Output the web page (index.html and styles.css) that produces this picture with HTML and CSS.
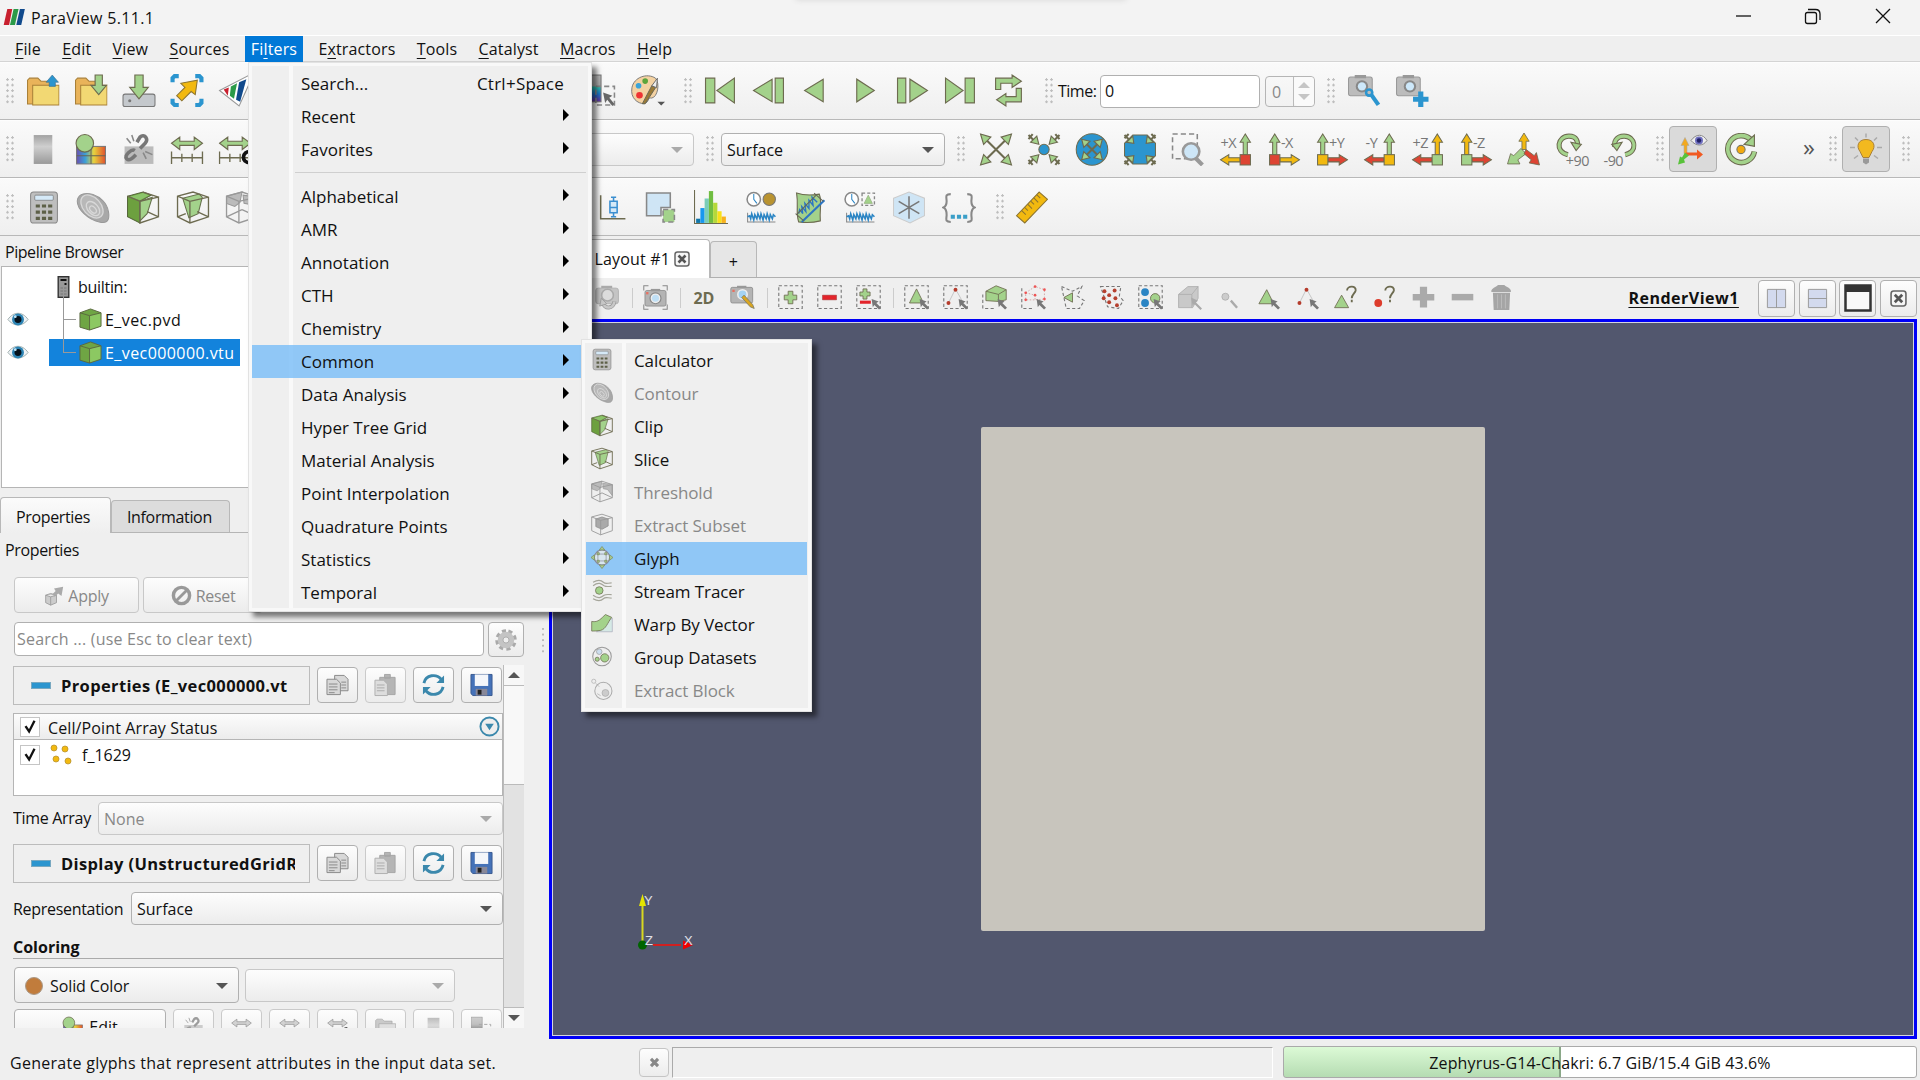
FILE: index.html
```html
<!DOCTYPE html>
<html lang="en">
<head>
<meta charset="utf-8">
<title>ParaView 5.11.1</title>
<link rel="stylesheet" href="styles.css">
</head>
<body>
<svg class="sprite" width="0" height="0">
<defs>
<linearGradient id="rainbow"><stop offset="0" stop-color="#6a4fb0"/><stop offset=".3" stop-color="#3aa0d8"/><stop offset=".6" stop-color="#e8d23c"/><stop offset="1" stop-color="#e0502c"/></linearGradient>
<linearGradient id="legend" x2="0" y2="1"><stop offset="0" stop-color="#bbb"/><stop offset=".4" stop-color="#aaa"/><stop offset=".45" stop-color="#2fc4b0"/><stop offset=".7" stop-color="#1b78cc"/><stop offset="1" stop-color="#6a2fa0"/></linearGradient>
<linearGradient id="grayv" x2="0" y2="1"><stop offset="0" stop-color="#a2a2a2"/><stop offset=".4" stop-color="#cfcfcf"/><stop offset="1" stop-color="#999"/></linearGradient>
</defs>
<symbol id="logo" viewBox="0 0 24 20"><path fill="#c8202f" d="M4 1h5.500L6 19H0z"/><path fill="#2b9a48" d="M11 1h5.500l-4 18H7z"/><path fill="#114a8c" d="M18 1h5.500l-4 18h-5.500z"/></symbol>
<symbol id="folder" viewBox="0 0 32 32"><path fill="#e9b35a" stroke="#a98038" d="M1 29V6l2-2h8l3 3h12v22z"/><path fill="#f2d873" stroke="#a98038" d="M6 11h25.500v19H6z"/></symbol>
<symbol id="open" viewBox="0 0 32 32"><use href="#folder"/><path fill="#2b95cf" stroke="#3f6f8c" stroke-width=".6" d="M25 1l6 7h-3v4h-6V8h-3z"/></symbol>
<symbol id="opendown" viewBox="0 0 32 32"><use href="#folder"/><path class="g" d="M20 1h7v10h4l-7.500 9L16 11h4z"/></symbol>
<symbol id="save" viewBox="0 0 32 32"><rect x=".5" y="19.500" width="31" height="12" rx="2" fill="#c4c8cc" stroke="#777"/><path class="g" d="M12 1h8v12h5l-9 11-9-11h5z"/><circle cx="7" cy="26" r="1.500" fill="#777"/></symbol>
<symbol id="extract" viewBox="0 0 32 32"><path fill="none" stroke="#2b95cf" stroke-width="4" d="M2 8V4l2-2h4M24 2h4l2 2v4M2 24v4l2 2h4M24 30h4l2-2v-4"/><path fill="#f2b90f" stroke="#8c7430" d="M26 6l-2 14-4-3-9 9-5-5 8-8-4-4z"/></symbol>
<symbol id="pvtri" viewBox="0 0 32 32"><path fill="#fff" stroke="#999" d="M1 16L30 1v8L20 31z"/><path fill="#c8202f" d="M5 15l5-2-1 8z"/><path fill="#2b9a48" d="M12 12l6-3-3 15-4-3z"/><path fill="#114a8c" d="M20 8l7-3-6 22-4-2z"/></symbol>
<symbol id="legendi" viewBox="0 0 32 32"><rect x="0" y="1" width="17" height="26" fill="url(#legend)" stroke="#777"/><path class="dash" d="M12 12h18v18H12z"/><path fill="#666" d="M19 18l9 3-3 2 5 6-2 2-5-6-2 3z"/></symbol>
<symbol id="palette" viewBox="0 0 36 34"><path fill="#f4d2a2" stroke="#777" d="M26 4C17-2 3 3 1 14s6 17 13 17c6-2 3-7 8-6 6-1 9-15 4-21z"/><circle cx="8" cy="12" r="3" fill="#3ba4d8"/><circle cx="15" cy="7" r="3" fill="#5da53c"/><circle cx="9" cy="22" r="3.500" fill="#e33"/><path fill="#9b7a35" stroke="#665" d="M12 31l10-19 4 2-11 17z"/><path fill="#eee" stroke="#666" d="M22 12l6-8-1 10z"/><path fill="#555" d="M28 29h8l-4 4z"/></symbol>
<symbol id="first" viewBox="0 0 32 32"><path class="g" d="M1 4h9v24H1zM29 4v24L12 16z"/></symbol>
<symbol id="prev" viewBox="0 0 32 32"><path class="g" d="M22 4h8v24h-8zM19 5v22L1 16z"/></symbol>
<symbol id="rev" viewBox="0 0 32 32"><path class="g" d="M22 5v22L4 16z"/></symbol>
<symbol id="play" viewBox="0 0 32 32"><path class="g" d="M8 5v22l17-11z"/></symbol>
<symbol id="next" viewBox="0 0 32 32"><path class="g" d="M1 4h8v24H1zM13 5v22l17-11z"/></symbol>
<symbol id="last" viewBox="0 0 32 32"><path class="g" d="M20 4h9v24h-9zM1 4v24l17-12z"/></symbol>
<symbol id="loop" viewBox="0 0 32 32"><path class="g" d="M3 15V4h16V1l9 6-9 6v-4H8v6zM28 14v13H13v4l-9-6 9-6v3h10v-8z"/></symbol>
<symbol id="cam" viewBox="0 0 32 32"><rect x="1" y="3" width="23" height="18" rx="2" fill="#bcbcbc" stroke="#999"/><path fill="#999" d="M7 1h11v3H7z"/><circle cx="14" cy="12" r="6" fill="#888"/><circle cx="14" cy="12" r="4" fill="#cde8fa"/></symbol>
<symbol id="camwrench" viewBox="0 0 32 32"><use href="#cam"/><path stroke="#2b95cf" stroke-width="4" fill="none" d="M23 20l7 10"/><circle cx="21" cy="18" r="3" fill="none" stroke="#2b95cf" stroke-width="2.500"/></symbol>
<symbol id="camplus" viewBox="0 0 32 32"><use href="#cam"/><path fill="#2b95cf" d="M22 17h5v5h5v5h-5v5h-5v-5h-5v-5h5z"/></symbol>
<symbol id="graybar" viewBox="0 0 32 32"><rect x="7" y="2" width="18" height="28" fill="url(#grayv)"/></symbol>
<symbol id="sphere" viewBox="0 0 32 32"><rect x="2" y="13" width="28" height="17" fill="url(#rainbow)" stroke="#777"/><path stroke="#665" fill="none" d="M2 22h28M16 13v17"/><circle class="g" cx="10" cy="10" r="8.500"/></symbol>
<symbol id="unlink" viewBox="0 0 32 32"><rect x="2" y="13" width="28" height="17" fill="#bbb"/><path fill="none" stroke="#777" stroke-width="3.500" d="M14 9l3-5c4-4 9 2 5 6l-5 5M12 17c-3-2-11 5-8 8s7-2 9-4"/><path stroke="#888" stroke-width="1.500" d="M4 5l4 5M9 2l2 6M20 19l3 6M22 18l7 3"/></symbol>
<symbol id="range" viewBox="0 0 32 32"><path class="g" d="M1 10l8-6v4h14V4l8 6-8 6v-4H9v4z"/><path fill="none" stroke="#6d6b50" stroke-width="1.300" d="M1 18v12M31 18v12M1 24h30M11 20v8M21 20v8"/></symbol>
<symbol id="rangec" viewBox="0 0 32 32"><use href="#range"/><path fill="none" stroke="#111" stroke-width="3.500" d="M31 18c-8-1-10 11 0 11"/></symbol>
<symbol id="resetcam" viewBox="0 0 32 32"><path stroke="#6d6b50" stroke-width="2" d="M5 5l22 22M27 5L5 27"/><path class="g" d="M1 1l10 3-7 7zM31 1l-10 3 7 7zM1 31l10-3-7-7zM31 31l-10-3 7-7z"/></symbol>
<symbol id="zoomdata" viewBox="0 0 32 32"><circle cx="16" cy="16" r="5" fill="#2b95cf" stroke="#6d6b50"/><path stroke="#6d6b50" stroke-width="2" d="M1 2l5 5M5 1l-4 5M31 2l-5 5M27 1l4 5M1 30l5-5M5 31l-4-5M31 30l-5-5M27 31l4-5"/><path class="g" d="M11 11L9 3l-6 6zM21 11l2-8 6 6zM11 21l-2 8-6-6zM21 21l2 8 6-6z"/></symbol>
<symbol id="ballout" viewBox="0 0 32 32"><circle cx="16" cy="16" r="15.300" fill="#2b95cf" stroke="#6d6b50"/><path stroke="#6d6b50" stroke-width="2" d="M9 9l14 14M23 9L9 23"/><path class="g" d="M6 6l8 2-6 6zM26 6l-8 2 6 6zM6 26l8-2-6-6zM26 26l-8-2 6-6z"/></symbol>
<symbol id="ballin" viewBox="0 0 32 32"><path fill="#2b95cf" stroke="#6d6b50" d="M9 2h14l8 8v12l-8 8H9l-8-8V10z"/><path stroke="#6d6b50" stroke-width="2" d="M1 2l4 4M5 1L1 5M31 2l-4 4M27 1l4 4M1 30l4-4M5 31l-4-4M31 30l-4-4M27 31l4-4"/><path class="g" d="M10 10L9 3 3 9zM22 10l1-7 6 6zM10 22l-1 7-6-6zM22 22l1 7 6-6z"/></symbol>
<symbol id="zoombox" viewBox="0 0 32 32"><path class="dash" d="M1 1h24v24H1z"/><path stroke="#999" stroke-width="4" d="M23 24l7 7"/><circle cx="19" cy="18" r="8" fill="#cde6f7" stroke="#999" stroke-width="2.500"/></symbol>
<symbol id="upL" viewBox="0 0 32 32"><path d="M5 21V9H2l5-8 5 8H9v12z"/></symbol>
<symbol id="upR" viewBox="0 0 32 32"><path d="M23 21V9h-3l5-8 5 8h-3v12z"/></symbol>
<symbol id="toR" viewBox="0 0 32 32"><path d="M12 24h11v-3l8 5-8 5v-3H12z"/></symbol>
<symbol id="toL" viewBox="0 0 32 32"><path d="M20 24H9v-3l-8 5 8 5v-3h11z"/></symbol>
<symbol id="iso" viewBox="0 0 32 32"><g stroke="#6d6b50" stroke-width=".8"><path fill="#f2b90f" d="M14 16V8h-3l5-8 5 8h-3v8z"/><path fill="#a3d28b" d="M13 15l5 5-8 6 2 4H0l3-10 3 2z"/><path fill="#dd4433" d="M18 16l8 6 2-3 3 12-10-2 2-3-7-6z"/></g></symbol>
<symbol id="rotp" viewBox="0 0 32 32"><path fill="none" stroke="#6d6b50" stroke-width="5" d="M12 21C-1 18 2 3 13 3c8 0 9 6 8 10"/><path fill="none" stroke="#a3d28b" stroke-width="3" d="M12 21C-1 18 2 3 13 3c8 0 9 6 8 10"/><path class="g" d="M15 9l10 2-5 6z"/></symbol>
<symbol id="rotm" viewBox="0 0 32 32"><path fill="none" stroke="#6d6b50" stroke-width="5" d="M21 21C34 18 31 3 20 3c-8 0-10 6-9 10"/><path fill="none" stroke="#a3d28b" stroke-width="3" d="M21 21C34 18 31 3 20 3c-8 0-10 6-9 10"/><path class="g" d="M18 9L8 11l5 6z"/></symbol>
<symbol id="orient" viewBox="0 0 32 32"><path fill="#f2a91f" stroke="#aaa" stroke-width=".6" d="M7 20V12H4l4-8 4 8h-2v8z"/><path fill="#f05a22" d="M9 19h11v-3l6 5-6 5v-4H9z"/><path fill="#58c23a" d="M8 19l4 3-5 4 1 3-7 2 2-8 2 1z"/><path fill="#eee" stroke="#888" d="M14 7c5-7 12-7 16 0-4 6-11 6-16 0z"/><circle cx="22" cy="7" r="4" fill="#7070c0"/><circle cx="22" cy="7" r="2.200" fill="#226"/></symbol>
<symbol id="center" viewBox="0 0 32 32"><path fill="none" stroke="#6d6b50" stroke-width="5.500" d="M26 7A13 13 0 1 0 29 18"/><path fill="none" stroke="#a3d28b" stroke-width="3.500" d="M26 7A13 13 0 1 0 29 18"/><path class="g" d="M29 2v11l-10-2z"/><circle cx="16" cy="16" r="4" fill="#f2a90f" stroke="#776"/></symbol>
<symbol id="bulb" viewBox="0 0 32 32"><path fill="#f2b91f" stroke="#a98038" d="M16 6c-8 0-10 7-6 12l3 6h6l3-6c4-5 2-12-6-12z"/><path fill="#999" d="M13 25h6v4l-3 2-3-2z"/><path stroke="#aaa" stroke-width="1.500" d="M16 0v4M5 4l3 3M27 4l-3 3M0 14h5M27 14h5M4 25l4-3M28 25l-4-3"/></symbol>
<symbol id="calc" viewBox="0 0 32 32"><rect x="3" y="1" width="26" height="30" rx="3" fill="#bebebe" stroke="#888"/><rect x="7" y="4" width="18" height="5" rx="1" fill="#d5e9f7" stroke="#777" stroke-width=".7"/><path fill="#5d6048" d="M8 13h4v3H8zM14 13h4v3h-4zM20 13h4v3h-4zM8 19h4v3H8zM14 19h4v3h-4zM20 19h4v3h-4zM8 25h4v3H8zM14 25h4v3h-4zM20 25h4v3h-4z"/></symbol>
<symbol id="contour" viewBox="0 0 32 32"><path fill="#a8a8a8" stroke="#999" d="M1 8C4-3 28 3 31 20c2 12-5 11-9 10C12 28-1 17 1 8z"/><g fill="#b8b8b8" stroke="#d8d8d8" stroke-width="1.300"><ellipse cx="15" cy="15" rx="13" ry="8.500" transform="rotate(48 15 15)"/><ellipse cx="16" cy="17" rx="8" ry="5" transform="rotate(48 16 17)"/><ellipse cx="16" cy="18" rx="4" ry="2.500" transform="rotate(48 16 18)"/></g></symbol>
<symbol id="clip" viewBox="0 0 32 32"><path fill="#6da03f" stroke="#55663a" d="M1 5l15-4 8 3-11 6v21L1 25z"/><path fill="#a3d28b" stroke="#66704c" d="M13 10l12-4-5 16-7 7z"/><path fill="#8cc46a" d="M3 5.500L16 2l6 2-9 5z"/><path fill="none" stroke="#6d6b50" stroke-width="1.300" d="M1 5l12 5 18-4v19l-18 6V10M16 1l15 5M20 20l11 5"/></symbol>
<symbol id="slice" viewBox="0 0 32 32"><path fill="#a3d28b" stroke="#66704c" d="M6 7l16-4 3 3-4 16-9 4z"/><path fill="none" stroke="#6d6b50" stroke-width="1.300" d="M1 5l15-4 15 5v19l-18 6-12-6zM1 5l12 5 18-4M13 10v21M20 20l11 5M1 25l8-3"/></symbol>
<symbol id="thresh" viewBox="0 0 32 32"><path fill="#bbb" stroke="#999" d="M1 5l15-4-2 10-5 4-8-3zM17 4l14 2v16l-7-9-6-1z"/><path fill="none" stroke="#999" stroke-width="1.300" d="M1 5l15-4 15 5v19l-18 6-12-6zM1 5l12 5 18-4M13 10v21M16 18l15 7M16 18L1 25"/></symbol>
<symbol id="subset" viewBox="0 0 32 32"><path fill="#aaa" stroke="#888" d="M7 8l9-3 9 3v10l-9 5-9-4z"/><path fill="none" stroke="#999" stroke-width="1.300" d="M1 5l15-4 15 5v19l-17 6-13-6zM1 5l13 5 17-4M14 10v21"/></symbol>
<symbol id="boxplot" viewBox="0 0 32 32"><path fill="none" stroke="#6d6b50" stroke-width="1.500" d="M5 4v23h24"/><path fill="#d5e9f7" stroke="#3b8fd0" stroke-width="1.500" d="M14 10h7v11h-7zM14 16h7M17.500 6v4M17.500 21v4M15 6h5M15 25h5"/></symbol>
<symbol id="exsel" viewBox="0 0 32 32"><path fill="#cfe5f5" stroke="#888" stroke-width="1.500" d="M2 2h23v14h-9v8H2z"/><path fill="#a3d28b" d="M18 18h11v12H18z"/><path class="dash" d="M18 18h11v12H18z"/></symbol>
<symbol id="hist" viewBox="0 0 32 32"><path fill="#17a" d="M2 27h4v4H2z"/><path fill="#1898f0" d="M6 17h4v14H6z"/><path fill="#7acdb8" d="M10 8h4v23h-4z"/><path fill="#70bd41" d="M14 1h4v30h-4z"/><path fill="#b5d93a" d="M18 12h4v19h-4z"/><path fill="#f9e018" d="M22 20h4v11h-4z"/><path fill="#f8b21c" d="M26 25h4v6h-4z"/><path fill="none" stroke="#6d6b50" d="M.5 0v31.500H32"/></symbol>
<symbol id="wave" viewBox="0 0 32 32"><path fill="none" stroke="#888" d="M3 21v9h27"/><path fill="none" stroke="#2b85c4" stroke-width="1.500" d="M3 25l2-1 1 3 1-5 2 6 1-5 2 4 1-5 2 5 1-5 2 6 1-5 2 4 1-5 2 6 1-5 2 4 1-4 2 2"/></symbol>
<symbol id="ptime" viewBox="0 0 32 32"><use href="#wave"/><circle cx="9" cy="8" r="6.500" fill="#fff" stroke="#888" stroke-width="1.500"/><path fill="none" stroke="#2b85c4" d="M9 3v5l3 4"/><circle cx="24" cy="8" r="6" fill="#b99330" stroke="#777"/></symbol>
<symbol id="ptimesel" viewBox="0 0 32 32"><use href="#wave"/><circle cx="8" cy="8" r="6.500" fill="#fff" stroke="#888" stroke-width="1.500"/><path fill="none" stroke="#2b85c4" d="M8 3v5l3 4"/><path fill="none" stroke="#888" stroke-width="1.300" stroke-dasharray="3 2" d="M18 2h12v12H18z"/><path fill="#a3d28b" stroke="#8aa873" stroke-width=".6" d="M20 12l4-8 4 8z"/></symbol>
<symbol id="pline" viewBox="0 0 32 32"><path class="g" d="M3 2c6 2 16 2 22 1 3 8 0 15 1 26-8 2-13 2-21 1-3-10 0-16-2-28z"/><path stroke="#2b75c4" stroke-width="2" d="M8 30L30 9"/><path fill="none" stroke="#2b75c4" stroke-width="1.300" d="M5 22l1-4 3 4-1-7 4 5-1-8 4 5 0-8 4 5-1-8 5 5"/><path stroke="#665" d="M2 22l8 7M20 2l9 8"/><path stroke="#665" d="M3 23L22 4"/></symbol>
<symbol id="snow" viewBox="0 0 32 32"><path fill="#cfe5f5" stroke="#ccc" d="M1 7l15-6 15 6v17l-14 7-16-7z"/><path stroke="#777" stroke-width="1.500" d="M16 5v22M6 10l20 12M26 10L6 22"/></symbol>
<symbol id="braces" viewBox="0 0 32 32"><path fill="none" stroke="#888" stroke-width="2" d="M8 3c-6 0-4 3-4 7s-1 5-3 6c2 1 3 3 3 7s-2 7 4 7M24 3c6 0 4 3 4 7s1 5 3 6c-2 1-3 3-3 7s2 7-4 7"/><path fill="#3b9fc8" d="M8 23h4v4H8zM14 23h4v4h-4zM20 23h4v4h-4z"/></symbol>
<symbol id="ruler" viewBox="0 0 32 32"><path fill="#f2b90f" stroke="#8c7430" d="M23 1l8 7L9 31l-8-7z"/><path stroke="#8c7430" d="M6 19l4 4M9 16l3 3M12 13l4 4M15 10l3 3M18 7l4 4M21 4l3 3"/></symbol>
<symbol id="camg" viewBox="0 0 32 32"><rect x="1" y="4" width="29" height="20" rx="3" fill="#c4c4c4" stroke="#aaa"/><path fill="#aaa" d="M8 1h14v3H8z"/><circle cx="16" cy="13" r="7.500" fill="#dcdcdc" stroke="#aaa" stroke-width="2"/><path fill="none" stroke="#999" stroke-width="5" d="M10 23c3 8 13 8 15-2"/><path fill="none" stroke="#c8c8c8" stroke-width="3" d="M10 23c3 8 13 8 15-2"/><path fill="#c8c8c8" stroke="#999" d="M6 27l2-10 7 7z"/></symbol>
<symbol id="camc" viewBox="0 0 32 32"><path fill="none" stroke="#888" stroke-width="1.300" d="M1 7V1h6M25 1h6v6M1 25v6h6M25 31h6v-6"/><rect x="2.500" y="7" width="27" height="20" rx="2.500" fill="#b4b4b4" stroke="#888"/><path fill="#999" d="M10 5h12v3H10z"/><circle cx="16" cy="17" r="7" fill="#eee" stroke="#888" stroke-width="1.500"/><circle cx="16" cy="17" r="4.500" fill="#bfdff5"/><path fill="#e87060" d="M4 9h3v3H4z"/></symbol>
<symbol id="campen" viewBox="0 0 32 32"><rect x="1" y="3" width="28" height="20" rx="2" fill="#b4b4b4" stroke="#888"/><path fill="#999" d="M9 1h12v3H9z"/><circle cx="16" cy="12" r="6" fill="#a5d3f2" stroke="#eee" stroke-width="2"/><path fill="#e87060" d="M3 6h3v3H3z"/><path fill="#d9a520" stroke="#776" d="M15 16l3-3 11 12 2 5-5-2z"/></symbol>
<symbol id="box" viewBox="0 0 32 32"><path class="dash2" d="M1 1h30v29H1z"/></symbol>
<symbol id="ptr" viewBox="0 0 32 32"><path fill="#777" d="M20 18l9 3-3 2 6 6-2.500 2.500-6-6-2 3z"/></symbol>
<symbol id="splus" viewBox="0 0 32 32"><use href="#box"/><path class="g" d="M13 8h6v5h5v6h-5v5h-6v-5H8v-6h5z"/></symbol>
<symbol id="sminus" viewBox="0 0 32 32"><use href="#box"/><path fill="#e3242b" stroke="#933" stroke-width=".6" d="M7 13h18v6H7z"/></symbol>
<symbol id="stog" viewBox="0 0 32 32"><use href="#box"/><path class="g" d="M9 5h5v4h4v5h-4v4H9v-4H5V9h4z"/><path fill="#e3242b" d="M5 20h14v4H5z"/><use href="#ptr"/></symbol>
<symbol id="scell" viewBox="0 0 32 32"><use href="#box"/><path class="g" d="M16 5l9 18H7z"/><use href="#ptr"/></symbol>
<symbol id="tri3" viewBox="0 0 32 32"><path fill="none" stroke="#bbb" d="M16 5l10 18M16 5L7 23"/><circle cx="16" cy="6" r="2.500" fill="#b53b2b"/><circle cx="7" cy="23" r="2.500" fill="#b53b2b"/><use href="#ptr"/></symbol>
<symbol id="spoint" viewBox="0 0 32 32"><use href="#box"/><use href="#tri3"/></symbol>
<symbol id="fcell" viewBox="0 0 32 32"><path class="dash2" d="M1 12v18h14"/><path class="g" d="M5 8L18 1l13 5v13l-10 2-16-1zM5 8l16 4v9M21 12l10-6"/><use href="#ptr"/></symbol>
<symbol id="fpoint" viewBox="0 0 32 32"><path class="dash2" d="M1 4v26h14"/><path fill="none" stroke="#c99" stroke-dasharray="2 2" d="M6 10l12-8 12 4v12l-12 1-12 0zM6 10l12 3v6"/><g fill="#e55"><circle cx="6" cy="10" r="1.700"/><circle cx="18" cy="2" r="1.700"/><circle cx="30" cy="6" r="1.700"/><circle cx="30" cy="18" r="1.700"/><circle cx="6" cy="19" r="1.700"/><circle cx="18" cy="13" r="1.700"/></g><use href="#ptr"/></symbol>
<symbol id="poly" viewBox="0 0 32 32"><path class="dash2" d="M2 2l14 6L28 2l-6 12 9 6-6 10H8z"/><path class="g" d="M5 16l11-6v12z"/></symbol>
<symbol id="polyp" viewBox="0 0 32 32"><path class="dash2" d="M2 2h26l-2 12 5 6-6 10-14-2z"/><g fill="#b5402f"><circle cx="7" cy="8" r="2.500"/><circle cx="20" cy="7" r="2.500"/><circle cx="13" cy="13" r="2.500"/><circle cx="21" cy="17" r="2.500"/><circle cx="6" cy="17" r="2.500"/><circle cx="13" cy="22" r="2.500"/><circle cx="23" cy="26" r="2.500"/></g></symbol>
<symbol id="blocks" viewBox="0 0 32 32"><use href="#box"/><circle cx="9" cy="9" r="5" fill="#2b85c4"/><circle cx="9" cy="23" r="5" fill="#2b85c4"/><circle class="g" cx="22" cy="17" r="6"/><use href="#ptr"/></symbol>
<symbol id="gcube" viewBox="0 0 32 32"><path fill="#c9c9c9" stroke="#aaa" d="M2 12L14 2h13v15l-7 12H2zM2 12h17v17M19 12l8-10"/><path fill="#aaa" d="M18 16l9 4-3 2 8 8-2 2-8-8-2 3z"/></symbol>
<symbol id="gpt" viewBox="0 0 32 32"><circle cx="12" cy="15" r="4.500" fill="#ccc" stroke="#aaa"/><path stroke="#aaa" stroke-width="3" d="M19 20l8 9"/></symbol>
<symbol id="hcell" viewBox="0 0 32 32"><path class="g" d="M15 6l9 18H5z"/><use href="#ptr"/></symbol>
<symbol id="qcell" viewBox="0 0 32 32"><path class="g" d="M11 13l9 16H2z"/><path class="q" d="M18 7c0-6 12-7 11 0-1 4-5 5-5 10M24 19v3"/></symbol>
<symbol id="qpt" viewBox="0 0 32 32"><circle cx="8" cy="23" r="5" fill="#dd3c2c"/><path class="q" d="M17 7c0-6 12-7 11 0-1 4-5 5-5 10M23 19v3"/></symbol>
<symbol id="gplus" viewBox="0 0 32 32"><path fill="#aaa" d="M11 1h10v10h10v9H21v10H11V20H1v-9h10z"/></symbol>
<symbol id="gminus" viewBox="0 0 32 32"><path fill="#aaa" d="M1 11h30v9H1z"/></symbol>
<symbol id="trash" viewBox="0 0 32 32"><path fill="#a5a5a5" d="M3 7c3-5 7-4 9-8h7c2 4 7 3 9 8v2H3zM5 10h22l-1 22H6z"/><path stroke="#c0c0c0" d="M11 12v18M16 12v18M21 12v18"/></symbol>
<symbol id="xbox" viewBox="0 0 16 16"><rect x="1" y="1" width="14" height="14" rx="2.500" fill="#f6f6f6" stroke="#666" stroke-width="1.500"/><path stroke="#555" stroke-width="2.600" d="M4.500 4.500l7 7M11.500 4.500l-7 7"/></symbol>
<symbol id="copy" viewBox="0 0 24 24"><g fill="#d8d8d8" stroke="#888"><path d="M9 2h10l4 4v12H9z"/><path d="M1 6h10l4 4v12H1z"/></g><path stroke="#888" d="M3 11h9M3 14h9M3 17h9M3 20h6M16 9h5M16 12h5M16 15h5"/></symbol>
<symbol id="paste" viewBox="0 0 24 24"><path fill="#b5b5b5" stroke="#a5a5a5" d="M6 4h16v18H6zM11 1h6v4h-6z"/><path fill="#ddd" stroke="#b0b0b0" d="M1 7h9l4 4v12H1z"/><path stroke="#aaa" d="M3 12h8M3 15h8M3 18h8"/></symbol>
<symbol id="reload" viewBox="0 0 24 24"><path fill="none" stroke="#3b88ac" stroke-width="3" d="M2 10C4 1 15 0 20 6M22 14c-2 9-13 10-18 4"/><path fill="#3b88ac" d="M23 2v8h-8zM1 22v-8h8z"/></symbol>
<symbol id="disk" viewBox="0 0 24 24"><path fill="#4572b8" stroke="#38598f" d="M1 1h22v22H3l-2-2z"/><path fill="#f4f6fa" d="M5 1h14v12H5z"/><path fill="#889" d="M6 16h12v7H6z"/><path fill="#222" d="M8 17h4v5H8z"/></symbol>
<symbol id="gear" viewBox="0 0 24 24"><path fill="none" stroke="#aaa" stroke-width="4.500" stroke-dasharray="4.200 3.260" d="M12 2.500a9.500 9.500 0 1 0 .01 0z"/><circle cx="12" cy="12" r="6" fill="none" stroke="#c4c4c4" stroke-width="6"/><circle cx="12" cy="12" r="3.300" fill="#eee" stroke="#aaa"/></symbol>
<symbol id="eye" viewBox="0 0 24 16"><path fill="#eef2f5" stroke="#9aa" d="M1 8C7-1 17-1 23 8c-6 8-16 8-22 0z"/><circle cx="12" cy="8" r="6.500" fill="#2d84b4"/><circle cx="12" cy="8" r="3.800" fill="#06121c"/><circle cx="9" cy="5" r="1.500" fill="#bfe3f5"/></symbol>
<symbol id="cube" viewBox="0 0 24 24"><path class="c1" d="M1 5l11-4 11 4v14l-12 4-10-3z"/><path class="c2" d="M11 8l12-3v14l-12 4z"/><path fill="none" stroke="#5b6840" d="M1 5l10 3 12-3M11 8v15M1 5l11-4 11 4v14l-12 4-10-3z"/></symbol>
<symbol id="server" viewBox="0 0 12 22"><rect x=".7" y=".7" width="10.600" height="20.600" fill="#999" stroke="#333" stroke-width="1.400"/><path fill="#111" d="M3 3h6v2H3zM7 7h2v2H7z"/><path stroke="#777" d="M3 12h6M3 15h6M3 18h6"/></symbol>
<symbol id="glyph" viewBox="0 0 32 32"><circle cx="16" cy="16" r="11" fill="#d8e6ee" stroke="#889" stroke-width="1.500"/><path fill="none" stroke="#889" d="M10 6v20M22 6v20M6 11h20M6 21h20"/><path fill="#a9c88d" stroke="#7a8a5a" d="M16 0l4 5h-8zM16 32l4-5h-8zM0 16l5-4v8zM32 16l-5-4v8zM9 9h3v3H9zM20 9h3v3h-3zM9 20h3v3H9zM20 20h3v3h-3z"/></symbol>
<symbol id="stream" viewBox="0 0 32 32"><path fill="none" stroke="#a5a59a" stroke-width="1.700" d="M3 4c7-4 12-3 15 0s6 1 12 1M3 9c8-6 12-3 16 0 3 2 6 1 11 1M3 23c8 6 12 3 16 0 3-2 6-1 11-1M3 28c7 4 12 3 15 0s6-1 12-1"/><circle class="g" cx="12" cy="16" r="5.500"/></symbol>
<symbol id="warp" viewBox="0 0 32 32"><path fill="#d5e9e5" stroke="#aab" d="M8 28h23V8z"/><path class="g" d="M1 13c10 2 14-5 20-10l9 4C24 15 22 24 14 26c-5 1-9 1-13 1z"/></symbol>
<symbol id="group" viewBox="0 0 32 32"><circle cx="16" cy="16" r="13.500" fill="#eee" stroke="#999" stroke-width="1.500"/><circle class="g" cx="20" cy="18" r="6"/><circle cx="12" cy="9" r="4" fill="#cde" stroke="#999"/><circle class="g" cx="9" cy="20" r="3"/></symbol>
<symbol id="exblock" viewBox="0 0 32 32"><circle cx="18" cy="18" r="12.500" fill="#eee" stroke="#aaa" stroke-width="1.500"/><circle cx="21" cy="21" r="5" fill="#ccc" stroke="#aaa"/><circle cx="4" cy="4" r="3" fill="#eee" stroke="#aaa"/><path fill="none" stroke="#aaa" d="M7 7l5 5M9 22l5 3"/></symbol>
</svg>

<header class="titlebar"><svg class="applogo"><use href="#logo"/></svg><span class="apptitle">ParaView 5.11.1</span>
<svg class="winctl" viewBox="0 0 160 24"><g fill="none" stroke="#111" stroke-width="1.300"><path d="M1 12h15"/><rect x="70.500" y="8.500" width="11" height="11" rx="2"/><path d="M73 5.500h7.500c3 0 4.500 1.500 4.500 4.500V16"/><path d="M141 5l14 14M155 5l-14 14"/></g></svg></header>
<nav class="menubar"><span><u>F</u>ile</span><span><u>E</u>dit</span><span><u>V</u>iew</span><span><u>S</u>ources</span><span class="on">Fi<u>l</u>ters</span><span>E<u>x</u>tractors</span><span><u>T</u>ools</span><span><u>C</u>atalyst</span><span><u>M</u>acros</span><span><u>H</u>elp</span></nav>

<div class="toolbar row1"><i class="grip"></i><svg><use href="#open"/></svg><svg><use href="#opendown"/></svg><svg><use href="#save"/></svg><svg><use href="#extract"/></svg><svg><use href="#pvtri"/></svg><div class="fill"></div><svg><use href="#legendi"/></svg><svg><use href="#palette"/></svg><i class="grip"></i><svg><use href="#first"/></svg><svg><use href="#prev"/></svg><svg><use href="#rev"/></svg><svg><use href="#play"/></svg><svg><use href="#next"/></svg><svg><use href="#last"/></svg><svg><use href="#loop"/></svg><i class="grip"></i><span class="timelabel">Time:</span><div class="field timeval">0</div><div class="spin"><b>0</b><em><s class="up"></s><s class="dn"></s></em></div><i class="grip"></i><svg><use href="#camwrench"/></svg><svg><use href="#camplus"/></svg></div>

<div class="toolbar row2"><i class="grip"></i><svg><use href="#graybar"/></svg><svg><use href="#sphere"/></svg><svg><use href="#unlink"/></svg><svg><use href="#range"/></svg><svg><use href="#rangec"/></svg><div class="fill"></div><div class="combo off c133"><s class="dn"></s></div><i class="grip wide"></i><div class="combo c224">Surface<s class="dn"></s></div><i class="grip wide"></i>
<svg><use href="#resetcam"/></svg><svg><use href="#zoomdata"/></svg><svg><use href="#ballout"/></svg><svg><use href="#ballin"/></svg><svg><use href="#zoombox"/></svg>
<svg viewBox="0 0 32 32"><use class="fg" href="#upR"/><use class="fy" href="#toL"/><rect class="fr" x="20" y="21" width="10" height="10"/><text class="axl" x="1" y="15">+X</text></svg>
<svg viewBox="0 0 32 32"><use class="fg" href="#upL"/><use class="fy" href="#toR"/><rect class="fr" x="2" y="21" width="10" height="10"/><text class="axl" x="13" y="15">-X</text></svg>
<svg viewBox="0 0 32 32"><use class="fg" href="#upL"/><use class="fr" href="#toR"/><rect class="fy" x="2" y="21" width="10" height="10"/><text class="axl" x="13" y="15">+Y</text></svg>
<svg viewBox="0 0 32 32"><use class="fg" href="#upR"/><use class="fr" href="#toL"/><rect class="fy" x="20" y="21" width="10" height="10"/><text class="axl" x="2" y="15">-Y</text></svg>
<svg viewBox="0 0 32 32"><use class="fy" href="#upR"/><use class="fr" href="#toL"/><rect class="fg" x="20" y="21" width="10" height="10"/><text class="axl" x="1" y="15">+Z</text></svg>
<svg viewBox="0 0 32 32"><use class="fy" href="#upL"/><use class="fr" href="#toR"/><rect class="fg" x="2" y="21" width="10" height="10"/><text class="axl" x="13" y="15">-Z</text></svg>
<svg><use href="#iso"/></svg><svg viewBox="0 0 32 32"><use href="#rotp"/><text class="axl" x="10" y="32">+90</text></svg><svg viewBox="0 0 32 32"><use href="#rotm"/><text class="axl" x="0" y="32">-90</text></svg><i class="grip"></i><div class="pressed"><svg><use href="#orient"/></svg></div><svg><use href="#center"/></svg><span class="more">»</span><i class="grip"></i><div class="pressed"><svg><use href="#bulb"/></svg></div><i class="grip"></i></div>

<div class="toolbar row3"><i class="grip"></i><svg><use href="#calc"/></svg><svg><use href="#contour"/></svg><svg><use href="#clip"/></svg><svg><use href="#slice"/></svg><svg><use href="#thresh"/></svg><div class="fill"></div><svg><use href="#boxplot"/></svg><svg><use href="#exsel"/></svg><svg class="tall"><use href="#hist"/></svg><svg><use href="#ptime"/></svg><svg><use href="#pline"/></svg><svg><use href="#ptimesel"/></svg><svg><use href="#snow"/></svg><svg><use href="#braces"/></svg><i class="grip"></i><svg><use href="#ruler"/></svg></div>

<main class="main">
<aside class="dock">
<div class="docktitle">Pipeline Browser</div>
<div class="tree">
<div class="trow t0"><svg class="server"><use href="#server"/></svg>builtin:</div>
<div class="trow"><svg class="eye"><use href="#eye"/></svg><span class="node"><i class="branch"></i><svg class="cube"><use href="#cube"/></svg>E_vec.pvd</span></div>
<div class="trow"><svg class="eye"><use href="#eye"/></svg><span class="node sel"><i class="branch end"></i><svg class="cube"><use href="#cube"/></svg>E_vec000000.vtu</span></div>
</div>
<div class="tabs"><span class="tab cur">Properties</span><span class="tab">Information</span></div>
<div class="docktitle2">Properties</div>
<div class="btns"><span class="btn gray"><svg class="ic20 applyic" viewBox="0 0 24 24"><path fill="#ccc" stroke="#999" d="M2 11l6-2 7 2v9l-7 3-6-3zM2 11l6 2 7-2M8 13v10"/><path fill="#aaa" d="M12 3l11-2-2 11-4-3-4 4-3-3 4-4z"/></svg>Apply</span><span class="btn gray rs"><svg class="ic21" viewBox="0 0 22 22"><circle cx="11" cy="11" r="8.500" fill="none" stroke="#999" stroke-width="3.600"/><path stroke="#999" stroke-width="3" d="M5 17L17 5"/></svg>Reset</span></div>
<div class="searchrow"><div class="field search">Search ... (use Esc to clear text)</div><span class="btn gearb"><svg><use href="#gear"/></svg></span><i class="vgrip"></i></div>
<div class="scrollwrap"><div class="props">
<div class="sect"><div class="sechead"><i></i><span>Properties (E_vec000000.vt</span></div><span class="btn sq"><svg><use href="#copy"/></svg></span><span class="btn sq dim"><svg><use href="#paste"/></svg></span><span class="btn sq"><svg><use href="#reload"/></svg></span><span class="btn sq"><svg><use href="#disk"/></svg></span></div>
<div class="arrays"><div class="arrhead"><i class="chk"><svg viewBox="0 0 20 20"><path d="M5 9l4 6 6-12"/></svg></i><span>Cell/Point Array Status</span><svg class="circ" viewBox="0 0 22 22"><circle cx="11" cy="11" r="9.500" fill="#eee" stroke="#3b88ac" stroke-width="2"/><path fill="#3b88ac" d="M6.500 8h9L11 15z"/></svg></div>
<div class="arrrow"><i class="chk"><svg viewBox="0 0 20 20"><path d="M5 9l4 6 6-12"/></svg></i><svg class="dots" viewBox="0 0 22 22"><g fill="#f2b90f" stroke="#b99330" stroke-width=".8"><circle cx="4" cy="4" r="3"/><circle cx="15" cy="5" r="3"/><circle cx="6" cy="15" r="3"/><circle cx="18" cy="17" r="3"/></g></svg><span>f_1629</span></div></div>
<div class="formrow tm"><label>Time Array</label><div class="combo off">None<s class="dn"></s></div></div>
<div class="sect s2"><div class="sechead"><i></i><span>Display (UnstructuredGridRe</span></div><span class="btn sq"><svg><use href="#copy"/></svg></span><span class="btn sq dim"><svg><use href="#paste"/></svg></span><span class="btn sq"><svg><use href="#reload"/></svg></span><span class="btn sq"><svg><use href="#disk"/></svg></span></div>
<div class="formrow rp"><label>Representation</label><div class="combo">Surface<s class="dn"></s></div></div>
<div class="coloring">Coloring</div>
<div class="colrow"><div class="combo solid"><i class="ball"></i>Solid Color<s class="dn"></s></div><div class="combo off comp"><s class="dn"></s></div></div>
<div class="editrow"><span class="btn edit"><svg><use href="#sphere"/></svg>Edit</span><span class="btn sq dim"><svg><use href="#unlink"/></svg></span><span class="btn sq dim arr"><svg><use href="#range"/></svg></span><span class="btn sq dim arr"><svg><use href="#range"/></svg></span><span class="btn sq dim arr"><svg><use href="#rangec"/></svg></span><span class="btn sq dim arr"><svg><use href="#folder"/></svg></span><span class="btn sq dim"><svg><use href="#graybar"/></svg></span><span class="btn sq dim"><svg><use href="#legendi"/></svg></span></div>
</div>
<div class="sbar"><div class="sbtn"><s class="up"></s></div><div class="thumb"></div><div class="track"></div><div class="sbtn"><s class="dn"></s></div></div></div>
</aside>
<section class="view">
<div class="vtabs"><span class="vtab cur">Layout #1 <svg><use href="#xbox"/></svg></span><span class="vtab plus">+</span></div>
<div class="vtool"><svg><use href="#camg"/></svg><i></i><svg><use href="#camc"/></svg><i></i><b class="twod">2D</b><svg><use href="#campen"/></svg><i></i><svg><use href="#splus"/></svg><svg><use href="#sminus"/></svg><svg><use href="#stog"/></svg><i></i><svg><use href="#scell"/></svg><svg><use href="#spoint"/></svg><svg><use href="#fcell"/></svg><svg><use href="#fpoint"/></svg><svg><use href="#poly"/></svg><svg><use href="#polyp"/></svg><svg><use href="#blocks"/></svg><svg><use href="#gcube"/></svg><svg><use href="#gpt"/></svg><svg><use href="#hcell"/></svg><svg><use href="#tri3"/></svg><svg><use href="#qcell"/></svg><svg><use href="#qpt"/></svg><svg class="sm"><use href="#gplus"/></svg><svg class="sm"><use href="#gminus"/></svg><svg><use href="#trash"/></svg>
<span class="rv">RenderView1</span>
<span class="btn vb"><svg viewBox="0 0 24 24"><path fill="#d3daee" stroke="#999" d="M2.500 2.500h19v19h-19zM12 2.500v19"/></svg></span><span class="btn vb"><svg viewBox="0 0 24 24"><path fill="#d3daee" stroke="#999" d="M2.500 2.500h19v19h-19zM2.500 12h19"/></svg></span><span class="btn vb big"><svg viewBox="0 0 28 28"><rect x="1.500" y="1.500" width="25" height="25" fill="#f8f8f8" stroke="#333" stroke-width="2.500"/><path fill="#333" d="M1 1h26v7H1z"/></svg></span><span class="btn vb x"><svg><use href="#xbox"/></svg></span></div>
<div class="frame"><div class="canvas"><div class="mesh"></div>
<svg class="axes" viewBox="0 0 60 60"><path stroke="#d8d820" stroke-width="2" d="M7.500 48V10"/><path fill="#e6e600" d="M7.500 0l3.500 12H4z"/><path stroke="#d02020" stroke-width="2" d="M18 51h28"/><path fill="#f00000" d="M58 51l-10 4.500v-9z"/><circle cx="7.500" cy="51" r="4.500" fill="#006400"/><text x="9" y="11">Y</text><text x="10" y="51">Z</text><text x="49" y="51">X</text></svg></div></div>
</section>
</main>
<footer class="status"><span class="msg">Generate glyphs that represent attributes in the input data set.</span><span class="btn abort"><svg viewBox="0 0 14 14"><path stroke="#888" stroke-width="4" d="M2.500 2.500l9 9M11.500 2.500l-9 9"/></svg></span><div class="prog"></div><div class="mem"><span>Zephyrus-G14-Chakri: 6.7 GiB/15.4 GiB 43.6%</span></div></footer>

<div class="notch"></div>
<div class="menu filters"><div class="mi">Search...<kbd>Ctrl+Space</kbd></div><div class="mi sub">Recent</div><div class="mi sub">Favorites</div><hr><div class="mi sub">Alphabetical</div><div class="mi sub">AMR</div><div class="mi sub">Annotation</div><div class="mi sub">CTH</div><div class="mi sub">Chemistry</div><div class="mi sub hot">Common</div><div class="mi sub">Data Analysis</div><div class="mi sub">Hyper Tree Grid</div><div class="mi sub">Material Analysis</div><div class="mi sub">Point Interpolation</div><div class="mi sub">Quadrature Points</div><div class="mi sub">Statistics</div><div class="mi sub">Temporal</div></div>
<div class="menu common"><div class="mi"><svg><use href="#calc"/></svg>Calculator</div><div class="mi na"><svg><use href="#contour"/></svg>Contour</div><div class="mi"><svg><use href="#clip"/></svg>Clip</div><div class="mi"><svg><use href="#slice"/></svg>Slice</div><div class="mi na"><svg><use href="#thresh"/></svg>Threshold</div><div class="mi na"><svg><use href="#subset"/></svg>Extract Subset</div><div class="mi hot"><svg><use href="#glyph"/></svg>Glyph</div><div class="mi"><svg><use href="#stream"/></svg>Stream Tracer</div><div class="mi"><svg><use href="#warp"/></svg>Warp By Vector</div><div class="mi"><svg><use href="#group"/></svg>Group Datasets</div><div class="mi na"><svg><use href="#exblock"/></svg>Extract Block</div></div>
</body>
</html>
```
FILE: styles.css
```css
*{box-sizing:border-box}
html,body{margin:0;width:1920px;height:1080px;overflow:hidden}
body{display:flex;flex-direction:column;position:relative;background:#efefef;font:16px "Open Sans","Noto Sans",sans-serif;color:#111;white-space:nowrap}
svg{display:block;flex:none;overflow:visible}
.sprite{position:absolute}
i,em{font-style:normal}
s.up,s.dn{display:block;width:0;height:0;border:6px solid transparent}
s.dn{border-top:6px solid #555;border-bottom:0}
s.up{border-bottom:6px solid #555;border-top:0}
.g{fill:#a3d28b;stroke:#6d6b50;stroke-width:1.1}
.fg{fill:#a3d28b}.fy{fill:#f2b90f}.fr{fill:#dd4433}
.fg,.fy,.fr{stroke:#6d6b50;stroke-width:1}
.dash{fill:none;stroke:#888;stroke-width:1.5;stroke-dasharray:5 3}
.dash2{fill:none;stroke:#777;stroke-width:1.4;stroke-dasharray:4 3}
.q{fill:none;stroke:#6d6b50;stroke-width:2.4}
.axl{font:14px "Open Sans",sans-serif;fill:#777;stroke:none;letter-spacing:-.5px}
.c1{fill:#6fa544}.c2{fill:#8cc862}
.sel .c1{fill:#39776a}.sel .c2{fill:#52a878}

.titlebar{height:36px;background:#f3f3f3;border-bottom:1px solid #fff;display:flex;align-items:center;padding-left:3px;flex:none}
.applogo{width:23px;height:18px;margin-top:-2px}
.apptitle{margin-left:5px;font-size:16px;letter-spacing:.35px}
.winctl{width:160px;height:24px;margin:-3px 25px 0 auto}
.menubar{height:26px;display:flex;padding-left:9px;border-bottom:1px solid #d4d4d4;flex:none;line-height:26px}
.menubar span{padding:0 6px;margin-right:9.3px;letter-spacing:.15px}
.menubar .on{background:#0078d7;color:#fff;height:26px}
.menubar u{text-underline-offset:3px}

.toolbar{height:58px;flex:none;display:flex;align-items:center;background:linear-gradient(#fafafa,#efefef);border-bottom:1px solid #b8b8b8;border-top:1px solid #fdfdfd}
.toolbar svg{width:34px;height:33px;margin:0 7px}
.row1>svg{position:relative;top:-1px}
.grip{width:8px;height:26px;margin:0 5px 0 12px;flex:none;background:radial-gradient(circle at 1.5px 1.5px,#bdbdbd 1px,transparent 1.4px);background-size:5px 5.6px}
.grip:first-child{margin-left:6px}
.grip.wide{margin-right:7px}
.grip.wide+svg{margin-left:7px}
.row1 .fill{width:317px}
.row2 .fill{width:302px}
.row3 .fill{width:320px}
.row3 svg{margin:0 7.8px}
.row3 .grip+svg:last-child{margin-left:6px}
.row3 svg.tall{height:38px}
.timelabel{width:42px;letter-spacing:-.5px}
.field{background:#fff;border:1px solid #b0b0b0;border-radius:4px;height:33px;padding-left:4px;line-height:31px}
.timeval{width:160px}
.spin{width:50px;height:31px;margin-left:5px;border:1px solid #b5b5b5;border-radius:4px;display:flex;color:#888}
.spin b{width:28px;font-weight:400;line-height:30px;padding-left:6px;border-right:1px solid #bbb}
.spin em{flex:1;display:flex;flex-direction:column;align-items:center;justify-content:center;gap:6px;background:#fafafa;border-radius:4px}
.spin s.up{border-bottom-color:#c5c5c5}.spin s.dn{border-top-color:#c5c5c5}
.combo{height:33px;border:1px solid #b0b0b0;border-radius:4px;background:linear-gradient(#fdfdfd,#ececec);display:flex;align-items:center;padding:1px 10px 0 5px}
.combo s{margin-left:auto}
.combo.off{color:#888;border-color:#c8c8c8}
.combo.off s{border-top-color:#aaa}
.c133{width:133px}.c224{width:224px}
.pressed{width:48px;height:46px;background:#dadada;border:1px solid #b0b0b0;border-radius:4px;display:flex;align-items:center;justify-content:center}
.pressed svg{margin:0;width:32px}
.more{width:50px;text-align:right;font-size:24px;color:#555;line-height:30px;padding-bottom:5px;margin-right:2px}

.main{flex:1;display:flex;min-height:0}
.dock{width:549px;display:flex;flex-direction:column}
.docktitle{height:30px;line-height:33px;padding-left:5px;letter-spacing:-.45px}
.tree{height:222px;margin:0 20px 0 1px;background:#fff;border:1px solid #b5b5b5;flex:none;padding-top:3px}
.trow{height:33px;display:flex;align-items:center;letter-spacing:.42px}
.t0{padding-left:55px;letter-spacing:-.3px}
.server{width:13px;height:22px;margin-right:8px}
.eye{width:22px;height:15px;margin-left:5px;margin-right:20px}
.node{display:flex;align-items:center;height:27px;padding:0 6px 0 14px}
.sel{background:#1383dc;color:#fff}
.branch{width:13px;height:33px;margin-right:3px;margin-top:-33px;border-left:1px solid #999;border-bottom:1px solid #999}
.cube{width:23px;height:23px;margin-right:3px}
.tabs{display:flex;align-items:flex-end;height:45px;border-bottom:1px solid #b5b5b5;flex:none}
.tab{height:32px;line-height:33px;padding:0 17px 0 15px;border:1px solid #b8b8b8;border-bottom:0;border-radius:4px 4px 0 0;background:#dcdcdc;width:119px;letter-spacing:-.35px}
.tab.cur{height:36px;line-height:38px;width:111px;background:linear-gradient(#fbfbfb,#efefef);margin-bottom:-1px}
.docktitle2{height:44px;line-height:35px;padding-left:5px;letter-spacing:-.35px;flex:none}
.btn{border:1px solid #b0b0b0;border-radius:4px;background:linear-gradient(#fdfdfd,#ececec);display:flex;align-items:center;justify-content:center;flex:none}
.btns{display:flex;gap:4px;padding-left:14px;height:45px;align-items:flex-start;flex:none}
.gray{width:125px;height:36px;color:#888;border-color:#c8c8c8;gap:4px;letter-spacing:-.3px;padding-top:1px}
.rs{width:120px}
.ic20{width:20px;height:20px}.ic21{width:21px;height:21px}
.searchrow{display:flex;gap:4px;padding-left:14px;height:43px;flex:none}
.search{width:470px;height:34px;color:#888;padding-left:2px;line-height:33px;letter-spacing:.2px}
.gearb{width:36px;height:35px}
.gearb svg{width:22px;height:22px}
.vgrip{width:3px;height:27px;margin:6px 0 0 14px;background:radial-gradient(circle at 1px 1px,#bbb 1px,transparent 1.3px);background-size:3px 5.6px}
.scrollwrap{display:flex;height:363px;padding-left:13px;flex:none}
.props{width:490px;overflow:hidden;display:flex;flex-direction:column}
.sect{display:flex;gap:7px;align-items:center;height:40px;flex:none}
.sechead{width:297px;height:39px;border:1px solid #bcbcbc;display:flex;align-items:center;padding:1px 14px 0 17px;font-size:16.5px;font-weight:700;letter-spacing:.36px}
.sechead i{width:20px;height:7px;background:#2b95cf;border:1px solid #78a8c0;margin-right:10px;flex:none}
.sechead span{overflow:hidden;flex:1}
.sq{width:41px;height:36px}
.sq svg{width:23px;height:24px}
.dim{border-color:#cacaca}
.arrays{height:83px;margin-top:8px;border:1px solid #b5b5b5;background:#fff;flex:none}
.arrhead,.arrrow{display:flex;align-items:center;height:26px;padding-left:6px}
.arrhead{background:linear-gradient(#fcfcfc,#ececec);border-bottom:1px solid #b5b5b5;letter-spacing:.12px}
.arrhead span{padding-top:2px}
.chk{width:20px;height:20px;background:#fff;border:1px solid #c5c5c5;margin-right:8px}
.chk svg{width:18px;height:18px}
.chk path{fill:none;stroke:#111;stroke-width:2.6}
.circ{width:21px;height:21px;margin:0 2px 0 auto}
.arrrow{height:30px}
.dots{width:22px;height:22px;margin-right:10px;margin-left:2px}
.formrow{display:flex;align-items:center;flex:none}
.formrow .combo{flex:1}
.formrow label{letter-spacing:-.3px}
.tm{margin-top:5px;height:34px}.tm label{width:85px}
.s2{margin-top:8px}
.rp{margin-top:8px;height:35px}.rp label{width:118px}
.coloring{height:33px;line-height:43px;font-weight:700;border-bottom:1px solid #aaa;flex:none}
.colrow{display:flex;gap:6px;align-items:center;margin:8px 0 0 1px;height:36px;flex:none}
.solid{width:225px;height:36px;padding-left:10px;letter-spacing:-.1px}
.ball{width:18px;height:18px;border-radius:9px;background:#c17c3c;border:1px solid #a98;margin-right:7px}
.comp{width:210px}
.editrow{display:flex;gap:7px;margin:6px 0 0 1px;flex:none}
.edit{width:152px;height:36px;gap:5px}
.edit svg{width:22px;height:22px}
.editrow .dim svg{opacity:.7;filter:grayscale(1);width:21px;height:22px}
.sbar{width:21px;display:flex;flex-direction:column;border-left:1px solid #bbb}
.sbtn{height:20px;display:flex;align-items:center;justify-content:center;background:#f7f7f7}
.thumb{height:100px;background:#f8f8f8;border:1px solid #bbb;border-width:1px 0}
.track{flex:1;background:#e2e2e2;border-bottom:1px solid #bbb}

.view{flex:1;display:flex;flex-direction:column}
.vtabs{height:42px;display:flex;align-items:flex-end;border-bottom:1px solid #b0b0b0;flex:none}
.vtab{border:1px solid #b8b8b8;border-bottom:0;border-radius:4px 4px 0 0}
.vtab.cur{width:161px;height:39px;background:#fff;display:flex;align-items:center;justify-content:flex-end;gap:4px;padding:0 19px 1px 0;margin-bottom:-1px;letter-spacing:.15px}
.vtab svg{width:16px;height:16px}
.plus{width:47px;height:36px;background:#e6e6e6;text-align:center;line-height:40px}
.vtool{height:41px;display:flex;align-items:center;padding:0 0 2px 39.5px;flex:none}
.vtool>svg{width:25px;height:25px;margin:0 7px}
.vtool>svg.sm{width:23px;height:23px;margin:0 8px}
.vtool>i{width:1px;height:20px;margin:0 3px 0 5px;background:#ccc}
.twod{width:39px;text-align:center;color:#6d6b50}
.rv{margin-left:107px;font-weight:700;text-decoration:underline;text-underline-offset:3px;width:130px;letter-spacing:.5px}
.vb{width:37px;height:37px;margin:1px 3.4px 0 0}
.vb svg{width:23px;height:23px}
.vb.big svg{width:28px;height:28px}
.vb.x svg{width:17px;height:17px}
.frame{flex:1;margin:0 3px 4px 0;border:3px solid #0000f5;display:flex}
.canvas{flex:1;border:1px solid #d5d5e0;background:#52576e;position:relative}
.mesh{position:absolute;left:428px;top:104px;width:504px;height:504px;background:#c8c5bd;border-radius:2px}
.axes{position:absolute;left:82px;top:571px;width:60px;height:60px}
.axes text{font:13px "Liberation Sans",sans-serif;fill:#e0e0e8}

.status{height:37px;flex:none;display:flex;align-items:flex-start;padding:3px 3px 0 10px}
.msg{width:629px;line-height:34px;letter-spacing:.28px}
.abort{width:30px;height:29px;margin-top:2px;border-color:#c5c5c5}
.abort svg{width:11px;height:11px}
.prog{width:601px;height:31px;margin:1px 10px 0 3px;border:1px solid #fff;border-top-color:#aaa;border-left-color:#aaa}
.mem{flex:1;height:32px;border:1px solid #aaa;border-radius:3px;background:linear-gradient(90deg,transparent 43.5%,#8aa888 43.5%,#8aa888 43.8%,#fff 43.8%),linear-gradient(#dcfad6,#b5dcb2);text-align:center;line-height:32px;letter-spacing:.14px}

.notch{position:absolute;left:796px;top:-7px;width:330px;height:6px;box-shadow:0 0 6px #ccc}
.menu{position:absolute;border:1px solid #e2e2e2;font-size:17px;background:#efefef;box-shadow:inset 0 0 0 3px #f8f8f8,5px 5px 5px rgba(0,0,0,.5)}
.menu::before{content:"";position:absolute;top:3px;bottom:3px;left:40px;width:4px;background:#f9f9f9}
.mi{height:33px;line-height:33px;display:flex;align-items:center;position:relative}
.filters{left:248px;top:62px;width:344px;height:550px;padding:4px 3px}
.filters .mi{padding:0 16px 0 49px}
.filters hr{height:1px;border:0;margin:6px 2px 7px 43px;background:#cfcfcf}
.filters kbd{font:inherit;margin:0 8px 0 auto;letter-spacing:.25px}
.sub::after{content:"";margin-left:auto;border:6px solid transparent;border-left:6px solid #000;border-right:0;margin-top:-3px;margin-right:3px}
.hot{background:rgba(131,193,247,.88)}
.common{left:581px;top:339px;width:231px;height:373px;padding:4px}
.common .mi svg{width:22px;height:23px;margin:-3px 21px 0 5px}
.common .mi{letter-spacing:-.1px}
.na{color:#888}
```
